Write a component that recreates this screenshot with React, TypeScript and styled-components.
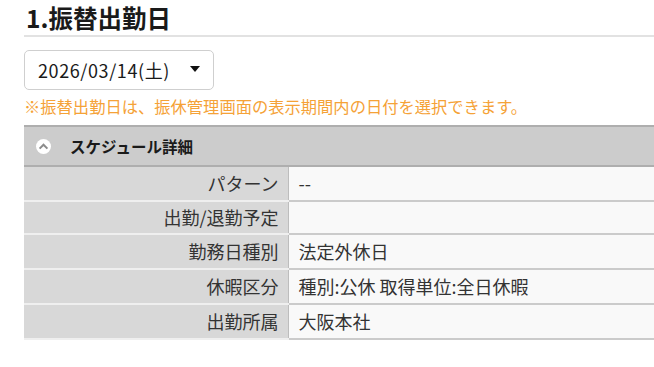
import React from "react";
import styled, { createGlobalStyle } from "styled-components";

const GlobalStyle = createGlobalStyle`
  body {
    margin: 0;
    background: #fff;
    font-family: "Noto Sans CJK JP", "Noto Sans", sans-serif;
    color: #333;
  }
`;

const Page = styled.div`
  padding-left: 24px;
`;

const Heading = styled.h2`
  margin: 0;
  line-height: 35px;
  font-size: 24.5px;
  font-weight: 700;
  color: #1a1a1a;
  padding-left: 2px;
  border-bottom: 2px solid #e2e2e2;
`;

const SelectBox = styled.div`
  margin-top: 13px;
  width: 190px;
  height: 40px;
  box-sizing: border-box;
  border: 1px solid #cfcfcf;
  border-radius: 5px;
  display: flex;
  align-items: center;
  justify-content: space-between;
  padding: 0 13px 0 13px;
  font-size: 18px;
  letter-spacing: 0.6px;
  color: #1a1a1a;
`;

const Caret = styled.span`
  width: 0;
  height: 0;
  border-left: 5px solid transparent;
  border-right: 5px solid transparent;
  border-top: 6px solid #111;
  margin-top: -2px;
`;

const Note = styled.p`
  margin: 4px 0 0;
  font-size: 16.3px;
  line-height: 24px;
  color: #f5a237;
`;

const Panel = styled.div`
  margin-top: 7px;
`;

const PanelHeader = styled.div`
  height: 38px;
  background: #cccccc;
  border-top: 2px solid #aeaeae;
  border-bottom: 2px solid #aeaeae;
  display: flex;
  align-items: center;
  padding-left: 12px;
  gap: 19px;
  font-size: 15.5px;
  font-weight: 700;
  color: #1a1a1a;
`;

const Table = styled.table`
  width: 100%;
  border-collapse: collapse;
  font-size: 18px;
`;

const Label = styled.th`
  width: 264px;
  box-sizing: border-box;
  background: #d8d8d8;
  text-align: right;
  font-weight: 400;
  color: #333;
  padding: 5px 9px 5px 0;
  line-height: 21px;
  border-bottom: 2px solid #efefef;
  border-right: 1px solid #bdbdbd;
`;

const Value = styled.td<{ $tall?: boolean }>`
  background: #f9f9f9;
  color: #333;
  padding: ${(p) => (p.$tall ? "6px" : "5px")} 10px;
  line-height: 21px;
  border-bottom: 2px solid #cbcbcb;
`;

const rows: [string, string][] = [
  ["パターン", "--"],
  ["出勤/退勤予定", ""],
  ["勤務日種別", "法定外休日"],
  ["休暇区分", "種別:公休 取得単位:全日休暇"],
  ["出勤所属", "大阪本社"],
];

const ChevronIcon = () => (
  <svg width="15" height="15" viewBox="0 0 15 15">
    <circle cx="7.5" cy="7.5" r="7.5" fill="#fff" />
    <path d="M3.6 9.6 L7.5 5.7 L11.4 9.6" fill="none" stroke="#8c8c8c" strokeWidth="2" />
  </svg>
);

export default function App() {
  return (
    <Page>
      <GlobalStyle />
      <Heading>1.振替出勤日</Heading>
      <SelectBox>
        <span>2026/03/14(土)</span>
        <Caret />
      </SelectBox>
      <Note>※振替出勤日は、振休管理画面の表示期間内の日付を選択できます。</Note>
      <Panel>
        <PanelHeader>
          <ChevronIcon />
          <span>スケジュール詳細</span>
        </PanelHeader>
        <Table>
          <tbody>
            {rows.map(([label, value]) => (
              <tr key={label}>
                <Label>{label}</Label>
                <Value $tall={value !== ""}>{value}</Value>
              </tr>
            ))}
          </tbody>
        </Table>
      </Panel>
    </Page>
  );
}
